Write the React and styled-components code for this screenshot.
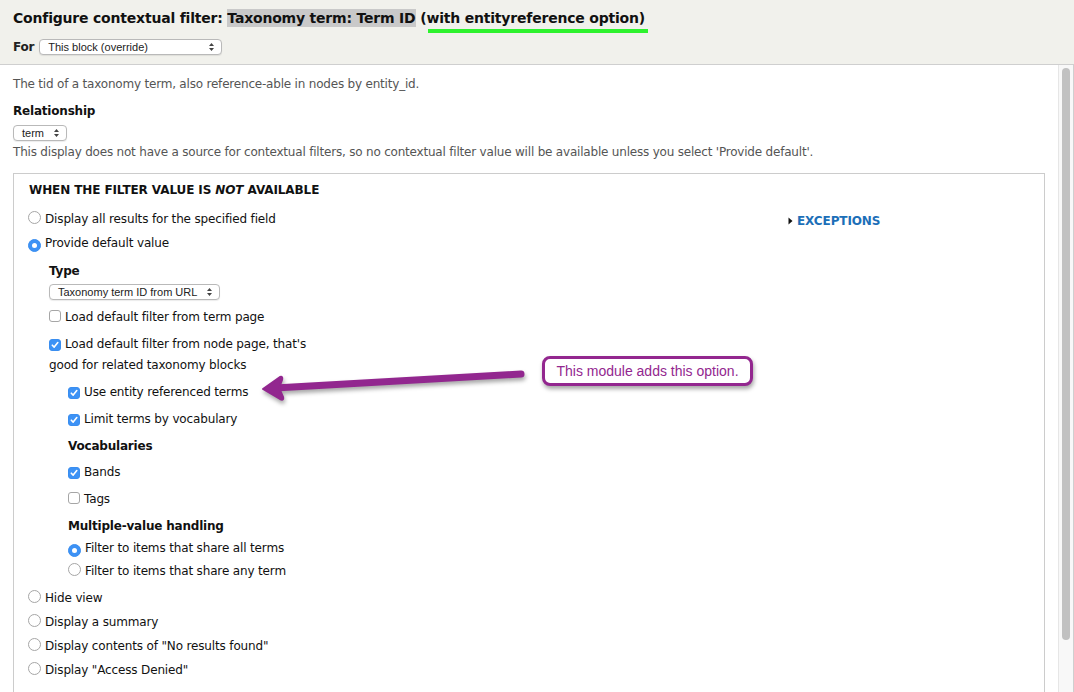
import React from "react";
import styled, { createGlobalStyle } from "styled-components";

const GlobalStyle = createGlobalStyle`
  html, body { margin: 0; padding: 0; background: #fff; }
  body {
    font-family: "DejaVu Sans", Verdana, sans-serif;
    font-size: 12px;
    color: #222;
  }
  * { box-sizing: border-box; }
`;

const Page = styled.div`
  position: relative;
  width: 1074px;
  height: 692px;
  overflow: hidden;
  display: flex;
  flex-direction: column;
`;

const Header = styled.div`
  height: 65px;
  flex: none;
  background: #f1f1ec;
  border-bottom: 1px solid #cfcfcf;
  padding: 8px 0 0 13px;
`;

const Title = styled.h1`
  margin: 0;
  font-size: 14px;
  line-height: 20px;
  font-weight: bold;
  color: #111;
  letter-spacing: -0.2px;
  white-space: nowrap;
`;

const Highlight = styled.span`
  background: #c9c9c9;
  padding: 1px 0;
`;

const Underlined = styled.span`
  position: relative;
  &::after {
    content: "";
    position: absolute;
    left: 8px;
    right: -3px;
    bottom: -7px;
    height: 4px;
    background: #2ef22e;
  }
`;

const ForRow = styled.div`
  display: flex;
  align-items: center;
  gap: 5px;
  margin-top: 11px;
`;

const Bold = styled.span`
  font-weight: bold;
  letter-spacing: -0.2px;
`;

const Body = styled.div`
  flex: 1;
  display: flex;
  min-height: 0;
`;

const Content = styled.div`
  flex: 1;
  padding: 10px 13px 0 13px;
  overflow: hidden;
`;

const Track = styled.div`
  width: 16px;
  flex: none;
  background: #f8f8f8;
  border-left: 1px solid #e6e6e6;
  border-right: 1px solid #cfcfcf;
  padding: 3px 0 0 3px;
`;

const Thumb = styled.div`
  width: 8px;
  height: 572px;
  border-radius: 4px;
  background: #c1c1c1;
`;

const Text = styled.p`
  margin: ${(p) => p.$mt || 0}px 0 0;
  line-height: 18px;
  color: #555;
  letter-spacing: -0.2px;
`;

const Heading = styled.div`
  margin-top: ${(p) => p.$mt || 0}px;
  margin-left: ${(p) => p.$indent || 0}px;
  line-height: 18px;
  font-weight: bold;
  letter-spacing: -0.2px;
  color: #111;
`;

const SelectBox = styled.div`
  display: inline-flex;
  align-items: center;
  justify-content: space-between;
  margin-top: ${(p) => p.$mt || 0}px;
  margin-left: ${(p) => p.$indent || 0}px;
  width: ${(p) => p.$w}px;
  height: 16px;
  padding: 0 6px 0 8px;
  border: 1px solid #b9b9b9;
  border-radius: 4px;
  background: #fff;
  box-shadow: 0 1px 1px rgba(0, 0, 0, 0.08);
  font-family: "Liberation Sans", Arial, sans-serif;
  font-size: 11px;
  color: #222;
`;

const Fieldset = styled.div`
  margin-top: 12px;
  height: 620px;
  border: 1px solid #cccccc;
  border-bottom: none;
  padding: 7px 14px 0 14px;
`;

const Legend = styled.div`
  padding-left: 1px;
  line-height: 18px;
  font-weight: bold;
  letter-spacing: -0.1px;
  color: #111;
`;

const Columns = styled.div`
  display: grid;
  grid-template-columns: 760px 1fr;
`;

const Option = styled.div`
  margin-top: ${(p) => p.$mt || 0}px;
  margin-left: ${(p) => p.$indent || 0}px;
  width: ${(p) => (p.$w ? `${p.$w}px` : "auto")};
  line-height: ${(p) => p.$lh || 18}px;
  letter-spacing: -0.15px;
  color: #111;
`;

const Box = styled.span`
  display: inline-flex;
  align-items: center;
  justify-content: center;
  vertical-align: -1px;
  width: 12px;
  height: 12px;
  margin-right: 4px;
  border-radius: 3px;
  border: 1px solid ${(p) => (p.$on ? "#3a8ef0" : "#a6a6a6")};
  background: ${(p) => (p.$on ? "#3d92f5" : "#fff")};
`;

const Circle = styled.span`
  display: inline-flex;
  align-items: center;
  justify-content: center;
  vertical-align: -1px;
  width: 13px;
  height: 13px;
  margin-right: 4px;
  border-radius: 50%;
  border: 1px solid ${(p) => (p.$on ? "#3a8ef0" : "#a6a6a6")};
  background: ${(p) => (p.$on ? "#3d92f5" : "#fff")};
  &::after {
    content: "";
    display: ${(p) => (p.$on ? "block" : "none")};
    width: 5px;
    height: 5px;
    border-radius: 50%;
    background: #fff;
  }
`;

const Exceptions = styled.a`
  display: flex;
  align-items: center;
  gap: 4px;
  margin-top: 13px;
  line-height: 18px;
  font-weight: bold;
  color: #1c6fb8;
  text-decoration: none;
  letter-spacing: -0.1px;
`;

const Callout = styled.div`
  position: absolute;
  left: 542px;
  top: 356px;
  width: 211px;
  height: 30px;
  display: flex;
  align-items: center;
  justify-content: center;
  border: 3px solid #93278f;
  border-radius: 8px;
  background: #fff;
  box-shadow: 1px 3px 4px rgba(0, 0, 0, 0.35);
  font-family: "Liberation Sans", Arial, sans-serif;
  font-size: 14px;
  color: #93278f;
`;

const Arrow = styled.svg`
  position: absolute;
  left: 255px;
  top: 362px;
  filter: drop-shadow(1px 3px 2px rgba(0, 0, 0, 0.35));
`;

function Arrows() {
  return (
    <svg width="7" height="10" viewBox="0 0 7 10">
      <path d="M3.5 1 L6 4 H1 Z M3.5 9 L6 6 H1 Z" fill="#444" />
    </svg>
  );
}

function Select({ label, w, mt, indent }) {
  return (
    <SelectBox $w={w} $mt={mt} $indent={indent}>
      <span>{label}</span>
      <Arrows />
    </SelectBox>
  );
}

function Check({ on }) {
  return (
    <Box $on={on}>
      {on && (
        <svg width="8" height="8" viewBox="0 0 8 8">
          <path d="M1.3 4.2 L3.2 6.1 L6.8 1.6" stroke="#fff" strokeWidth="1.6" fill="none" strokeLinecap="round" strokeLinejoin="round" />
        </svg>
      )}
    </Box>
  );
}

export default function App() {
  return (
    <Page>
      <GlobalStyle />
      <Header>
        <Title>
          Configure contextual filter: <Highlight>Taxonomy term: Term ID</Highlight>{" "}
          <Underlined>(with entityreference option)</Underlined>
        </Title>
        <ForRow>
          <Bold>For</Bold>
          <Select label="This block (override)" w={183} />
        </ForRow>
      </Header>
      <Body>
        <Content>
          <Text>The tid of a taxonomy term, also reference-able in nodes by entity_id.</Text>
          <Heading $mt={9}>Relationship</Heading>
          <Select label="term" w={54} mt={5} />
          <Text $mt={2}>
            This display does not have a source for contextual filters, so no contextual filter value will be available unless you select 'Provide default'.
          </Text>
          <Fieldset>
            <Legend>
              WHEN THE FILTER VALUE IS <em>NOT</em> AVAILABLE
            </Legend>
            <Columns>
              <div>
                <Option $mt={11}><Circle />Display all results for the specified field</Option>
                <Option $mt={6}><Circle $on />Provide default value</Option>
                <Heading $mt={10} $indent={21}>Type</Heading>
                <Select label="Taxonomy term ID from URL" w={171} mt={4} indent={21} />
                <Option $mt={8} $indent={21}><Check />Load default filter from term page</Option>
                <Option $mt={8} $indent={21} $lh={21} $w={262}>
                  <Check on />Load default filter from node page, that's good for related taxonomy blocks
                </Option>
                <Option $mt={7} $indent={40}><Check on />Use entity referenced terms</Option>
                <Option $mt={9} $indent={40}><Check on />Limit terms by vocabulary</Option>
                <Heading $mt={9} $indent={40}>Vocabularies</Heading>
                <Option $mt={8} $indent={40}><Check on />Bands</Option>
                <Option $mt={9} $indent={40}><Check />Tags</Option>
                <Heading $mt={9} $indent={40}>Multiple-value handling</Heading>
                <Option $mt={4} $indent={40}><Circle $on />Filter to items that share all terms</Option>
                <Option $mt={5} $indent={40}><Circle />Filter to items that share any term</Option>
                <Option $mt={9}><Circle />Hide view</Option>
                <Option $mt={6}><Circle />Display a summary</Option>
                <Option $mt={6}><Circle />Display contents of "No results found"</Option>
                <Option $mt={6}><Circle />Display "Access Denied"</Option>
              </div>
              <div>
                <Exceptions href="#">
                  <svg width="5" height="8" viewBox="0 0 5 8">
                    <path d="M0.5 0.5 L4.5 4 L0.5 7.5 Z" fill="#111" />
                  </svg>
                  EXCEPTIONS
                </Exceptions>
              </div>
            </Columns>
          </Fieldset>
        </Content>
        <Track>
          <Thumb />
        </Track>
      </Body>
      <Callout>This module adds this option.</Callout>
      <Arrow width="275" height="45" viewBox="0 0 275 45">
        <path d="M20 26 L266 12" stroke="#92278f" strokeWidth="7" strokeLinecap="round" />
        <path d="M8 27 L25 15 Q28 14 27 18 L24 26 L28 35 Q29 39 25 37 Z" fill="#92278f" stroke="#92278f" strokeWidth="2" strokeLinejoin="round" />
      </Arrow>
    </Page>
  );
}
